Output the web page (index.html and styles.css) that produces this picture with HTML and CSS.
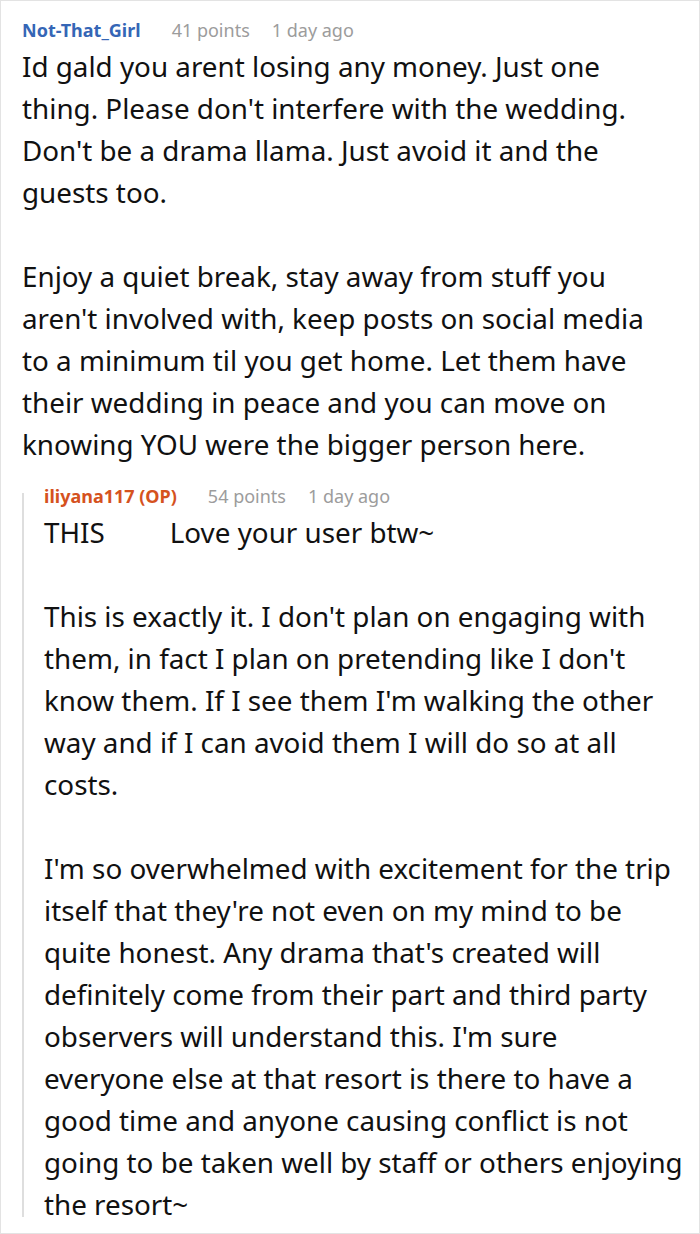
FILE: index.html
```html
<!DOCTYPE html>
<html>
<head>
<meta charset="utf-8">
<link rel="stylesheet" href="styles.css">
</head>
<body>
<div class="comment">
  <div class="meta">
    <span class="author">Not-That_Girl</span>
    <span class="points">41 points</span>
    <span class="time">1 day ago</span>
  </div>
  <div class="text">
    <p>Id gald you arent losing any money. Just one<br>thing. Please don't interfere with the wedding.<br>Don't be a drama llama. Just avoid it and the<br>guests too.</p>
    <p>Enjoy a quiet break, stay away from stuff you<br>aren't involved with, keep posts on social media<br>to a minimum til you get home. Let them have<br>their wedding in peace and you can move on<br>knowing YOU were the bigger person here.</p>
  </div>
  <div class="reply">
    <div class="meta reply-meta">
      <span class="author op">iliyana117 (OP)</span>
      <span class="points">54 points</span>
      <span class="time">1 day ago</span>
    </div>
    <div class="text">
      <p>THIS&nbsp;&nbsp;&nbsp;&nbsp;&nbsp;&nbsp;&nbsp;&nbsp; Love your user btw~</p>
      <p>This is exactly it. I don't plan on engaging with<br>them, in fact I plan on pretending like I don't<br>know them. If I see them I'm walking the other<br>way and if I can avoid them I will do so at all<br>costs.</p>
      <p>I'm so overwhelmed with excitement for the trip<br>itself that they're not even on my mind to be<br>quite honest. Any drama that's created will<br>definitely come from their part and third party<br>observers will understand this. I'm sure<br>everyone else at that resort is there to have a<br>good time and anyone causing conflict is not<br>going to be taken well by staff or others enjoying<br>the resort~</p>
    </div>
  </div>
</div>
</body>
</html>
```

FILE: styles.css
```css
html, body {
  margin: 0;
  padding: 0;
  background: #ffffff;
}

body {
  font-family: "Noto Sans", "Open Sans", sans-serif;
  color: #111111;
}

.comment {
  box-sizing: border-box;
  width: 700px;
  height: 1234px;
  overflow: hidden;
  border: 1px solid #e3e3e3;
  padding: 14px 14px 8px 21px;
}

.meta {
  display: flex;
  align-items: center;
  height: 30px;
  font-size: 18px;
  line-height: 30px;
  white-space: nowrap;
}

.author {
  font-weight: 700;
  color: #3566b6;
  margin-right: 31px;
}

.author.op {
  color: #d5521e;
}

.points {
  color: #9c9c9c;
  margin-right: 22px;
}

.time {
  color: #9c9c9c;
}

.text {
  font-size: 27.8px;
  line-height: 42px;
}

.text p {
  margin: 0 0 42px 0;
  white-space: nowrap;
}

.text p:last-child {
  margin-bottom: 0;
}

.reply {
  margin-top: 19px;
  padding-left: 22px;
  background: linear-gradient(#dedede, #dedede) no-repeat 0 9px / 2px calc(100% - 17px);
}

.reply-meta {
  height: 24px;
  line-height: 24px;
  margin-bottom: 3px;
}
```
